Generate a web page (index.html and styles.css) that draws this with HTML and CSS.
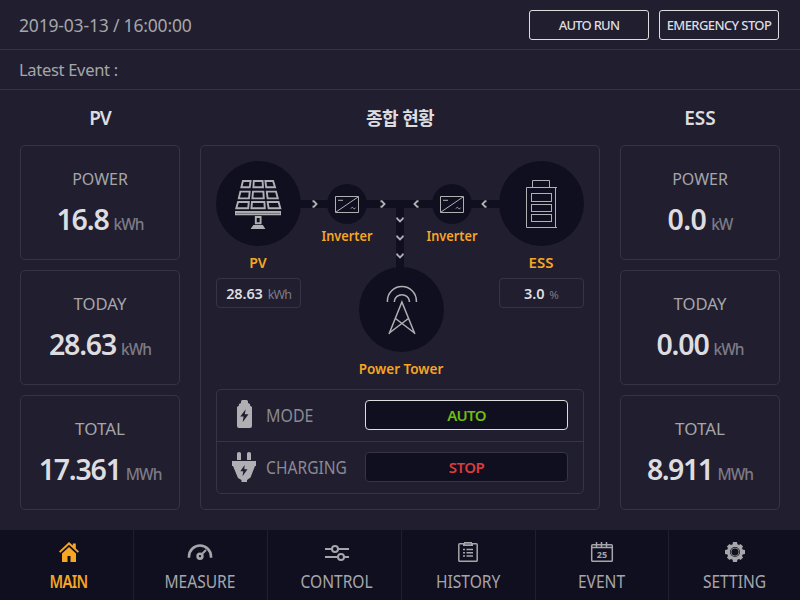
FILE: index.html
```html
<!DOCTYPE html>
<html lang="ko">
<head>
<meta charset="utf-8">
<title>Energy Monitor</title>
<link rel="stylesheet" href="styles.css">
</head>
<body>
<header class="topbar">
  <span class="clock">2019-03-13 / 16:00:00</span>
  <div class="actions">
    <button class="action auto-run">AUTO RUN</button>
    <button class="action emergency">EMERGENCY STOP</button>
  </div>
</header>
<div class="event-bar"><span>Latest Event :</span></div>

<main class="board">
  <section class="side">
    <h2><span class="t-pv">PV</span></h2>
    <div class="card"><p class="name n-power">POWER</p><p class="reading"><b>16.8</b><i>kWh</i></p></div>
    <div class="card"><p class="name n-today">TODAY</p><p class="reading"><b>28.63</b><i>kWh</i></p></div>
    <div class="card"><p class="name n-total">TOTAL</p><p class="reading"><b>17.361</b><i>MWh</i></p></div>
  </section>

  <section class="overview">
    <h2><span class="t-all">종합 현황</span></h2>
    <div class="panel">
      <div class="diagram">
        <div class="wire wire-h"></div>
        <div class="wire wire-v"></div>

        <svg class="node node-pv" viewBox="216 161 85 85">
          <circle class="disc" cx="258.5" cy="203.5" r="42.5"/>
          <g class="line thick">
            <path d="M242.9 181H250.6L249.7 187.3H241.4ZM253.8 181H262.6L263 187.3H253.4ZM265.4 181H273.1L275 187.3H266.2Z"/>
            <path d="M240.4 191.6H249.7L249 198.4H238.8ZM253 191.6H263.4L263.8 198.4H252.4ZM266.8 191.6H276L277.8 198.4H267.6Z"/>
            <path d="M238 202H248.8L248.2 208.3H236.3ZM252 202H264.4L264.8 208.3H251.4ZM267.6 202H278.6L280.3 208.3H268.6Z"/>
            <path d="M255.8 217H260.6V223.3H255.8Z"/>
          </g>
          <path class="solid" d="M235 211h46v4.3h-46ZM253.4 225h9.4l2.6 4h-14.8Z"/>
          <path class="cut" d="M236 213.4h44"/>
        </svg>

        <svg class="node node-inv1" viewBox="0 0 40 40">
          <circle class="disc" cx="20" cy="20" r="20"/>
          <path class="line" d="M8.5 12.5h23v16h-23ZM9 28l22-15"/>
          <path class="line" d="M11 16.3h5"/>
          <path class="line" d="M24 24.5c.8-1.5 1.7-1.2 2.3-.4s1.500 1.100 2.300-.4"/>
        </svg>
        <svg class="node node-inv2" viewBox="0 0 40 40">
          <circle class="disc" cx="20" cy="20" r="20"/>
          <path class="line" d="M8.500 12.500h23v16h-23ZM9 28l22-15"/>
          <path class="line" d="M11 16.300h5"/>
          <path class="line" d="M24 24.500c.8-1.500 1.700-1.200 2.300-.4s1.500 1.100 2.300-.4"/>
        </svg>

        <svg class="node node-ess" viewBox="499 161 85 85">
          <circle class="disc" cx="541.5" cy="203.500" r="42.500"/>
          <path class="line" d="M532.500 187v-6.500h17V187M526.500 187.500h29v40h-29ZM555 187.500h2M555 227.500h2"/>
          <path class="line" d="M531.500 193v8.500M551.500 193v8.500M531 193.500h21M531 201.500h21M531.500 204v8M551.500 204v8M531 204.500h21M531 211.500h21M531.500 214v8M551.500 214v8M531 214.500h21M531 221.500h21"/>
        </svg>

        <svg class="node node-tower" viewBox="359 267 85 85">
          <circle class="disc" cx="401.500" cy="309.500" r="42.500"/>
          <g class="line tower">
            <path d="M387.400 302v-1a14.500 14.500 0 0 1 29 0v1"/>
            <path d="M394.400 302v-1a7.600 7.600 0 0 1 15 0v1"/>
            <path d="M389 334L401.900 302 414.900 334M395.500 318.500L414.500 333M408.400 318.500L389.300 333"/>
          </g>
        </svg>

        <svg class="arrows" viewBox="216 161 368 192">
          <path d="M312.500 201.200h1.300l2.700 2.800-2.700 2.800h-1.300M380.500 201.200h1.300l2.700 2.800-2.700 2.800h-1.300"/>
          <path d="M418.500 201.200h-1.300l-2.700 2.800 2.700 2.800h1.300M486.500 201.200h-1.300l-2.700 2.800 2.700 2.800h1.300"/>
          <path d="M397.200 217.500v1.200l2.800 2.700 2.800-2.700v-1.200M397.200 235.500v1.200l2.800 2.700 2.800-2.700v-1.200M397.200 253.500v1.200l2.800 2.700 2.800-2.700v-1.200"/>
        </svg>

        <span class="tag tag-inv1">Inverter</span>
        <span class="tag tag-inv2">Inverter</span>
        <span class="tag tag-pv">PV</span>
        <span class="tag tag-ess">ESS</span>
        <span class="tag tag-tower">Power Tower</span>
        <div class="meter meter-pv"><b>28.63</b><i>kWh</i></div>
        <div class="meter meter-ess"><b>3.0</b><i class="pct">%</i></div>
      </div>

      <div class="controls">
        <div class="control">
          <svg class="cicon" viewBox="0 0 26 30"><path class="solid" d="M9 1.500q0-1.500 1.500-1.500h4q1.500 0 1.500 1.500v1.500l2 1v1.500l2 1.500V26q0 2-2 2H7q-2 0-2-2V7l2-1.500V4l2-1Z"/><path class="bolt" d="M13.700 9.200L8.300 16.500h3.300l-1 5.700 5.900-8h-3.700Z"/></svg>
          <span class="clabel l-mode">MODE</span>
          <button class="state on">AUTO</button>
        </div>
        <div class="control">
          <svg class="cicon" viewBox="0 0 26 30"><path class="solid" d="M5 1.500Q5 0 7 0t2 1.500V8H5ZM15 1.500Q15 0 17 0t2 1.500V8h-4ZM0 9h24v5h-1l-4.500 11.500L15 28v2H9.500v-2L6 26 1 14H0Z"/><path class="bolt" d="M12.700 13L8.300 19.200h3l-.8 5 5-7h-3.200Z"/></svg>
          <span class="clabel l-charging">CHARGING</span>
          <button class="state off">STOP</button>
        </div>
      </div>
    </div>
  </section>

  <section class="side">
    <h2><span class="t-ess">ESS</span></h2>
    <div class="card"><p class="name n-power">POWER</p><p class="reading"><b class="short">0.0</b><i>kW</i></p></div>
    <div class="card"><p class="name n-today">TODAY</p><p class="reading"><b>0.00</b><i>kWh</i></p></div>
    <div class="card"><p class="name n-total">TOTAL</p><p class="reading"><b class="tight">8.911</b><i>MWh</i></p></div>
  </section>
</main>

<nav class="tabs">
  <a class="tab active">
    <svg viewBox="0 0 26 22"><path class="fill" d="M3 11.500L13 2l3.800 3.500V3.500h3v5L23 11.500l-1.200 1.300L13 4.800l-8.700 8ZM6 13.500l7-6.400 7 6.400V22h-5.500v-6h-3v6H6Z"/></svg>
    <span class="m-main">MAIN</span>
  </a>
  <a class="tab measure">
    <svg viewBox="0 0 26 22"><path class="stroke w3" d="M2 17.800V16.500A11 11 0 0 1 24 16.500v1.300"/><circle class="stroke w3" cx="13" cy="16.200" r="2.400"/><path class="stroke w2" d="M15 14l4-4"/></svg>
    <span>MEASURE</span>
  </a>
  <a class="tab">
    <svg viewBox="0 0 26 22"><path class="stroke w2" d="M1 9h7M14 9h11M1 17h13M20 17h5"/><circle class="stroke knob" cx="11" cy="9" r="3"/><circle class="stroke knob" cx="17" cy="17" r="3"/></svg>
    <span>CONTROL</span>
  </a>
  <a class="tab history">
    <svg viewBox="0 0 26 22"><rect class="stroke" x="3.800" y="3.800" width="18.400" height="17.500" rx="1"/><path class="fill" d="M8 3h1V2h8v1h1v3H8Z"/><path class="dim" d="M10 4h6"/><path class="stroke" d="M8 9.500h2M11.500 9.500H18M8 12.700h2M11.500 12.700H18M8 16h2M11.500 16H18"/></svg>
    <span>HISTORY</span>
  </a>
  <a class="tab event">
    <svg viewBox="0 0 26 22"><rect class="stroke" x="2.700" y="4.700" width="20.600" height="16.600" rx="1"/><path class="stroke" d="M3 7.500h20M7.500 2v5M12.500 2v5M17.500 2v5"/><text x="13" y="17.600">25</text></svg>
    <span>EVENT</span>
  </a>
  <a class="tab setting">
    <svg viewBox="0 0 26 22"><circle class="stroke gear" cx="13" cy="12" r="6.500"/><path class="fill" d="M11 2h4l.7 4h-5.400ZM11 22h4l.7-4h-5.400ZM3 10v4l4 .7V9.300ZM23 10v4l-4 .7V9.300ZM4.900 6.500l2.600-2.600 3.200 2.300-3.500 3.500ZM21.100 6.500l-2.600-2.600-3.200 2.300 3.500 3.500ZM4.900 17.500l2.600 2.600 3.200-2.300-3.500-3.500ZM21.100 17.500l-2.600 2.600-3.200-2.300 3.500-3.500Z"/><circle class="hub" cx="13" cy="12" r="4"/></svg>
    <span>SETTING</span>
  </a>
</nav>
</body>
</html>
```
FILE: styles.css
```css
* { box-sizing: border-box; }

body {
  margin: 0;
  width: 800px;
  height: 600px;
  overflow: hidden;
  display: flex;
  flex-direction: column;
  background: #201e2f;
  color: #a6a6aa;
  font-family: "Noto Sans", "Noto Sans CJK KR", sans-serif;
  font-size: 16.500px;
}

p, h2 { margin: 0; }
b { font-weight: 600; }
i { font-style: normal; }
span, b, i, .name { white-space: nowrap; }

.topbar {
  height: 50px;
  padding: 0 21px 0 19px;
  display: flex;
  align-items: center;
  justify-content: space-between;
  border-bottom: 1px solid #363445;
}
.clock { font-size: 17.500px; letter-spacing: -0.180px; }
.actions { display: flex; gap: 10px; }
.action {
  width: 120px;
  height: 30px;
  padding: 1px 0 0;
  border: 1px solid #dddde0;
  border-radius: 3px;
  background: transparent;
  color: #dddde0;
  font: 500 13px "Noto Sans", sans-serif;
  white-space: nowrap;
}
.auto-run { letter-spacing: -0.750px; }
.emergency { letter-spacing: -0.600px; }

.event-bar {
  height: 40px;
  padding-left: 19px;
  display: flex;
  align-items: center;
  border-bottom: 1px solid #363445;
  letter-spacing: -0.300px;
}

.board {
  height: 440px;
  padding: 0 20px;
  display: flex;
  gap: 20px;
}
.side { width: 160px; display: flex; flex-direction: column; }
.overview { width: 400px; }
h2 {
  height: 55px;
  line-height: 57px;
  text-align: center;
  font-size: 19px;
  font-weight: 600;
  color: #dddde0;
}
.t-pv { letter-spacing: -1px; }
.t-all {
  font-family: "Noto Sans CJK KR", sans-serif;
  font-weight: 700;
  font-size: 18px;
  line-height: 53px;
  letter-spacing: -0.700px;
}

.card {
  height: 115px;
  margin-bottom: 10px;
  padding-top: 20px;
  border: 1px solid #363445;
  border-radius: 5px;
  text-align: center;
}
.name { height: 26px; line-height: 25px; font-size: 17px; }
.n-power { transform: scaleX(0.940); }
.n-today { transform: scaleX(0.980); }
.reading { height: 40px; margin-top: 7px; line-height: 40px; color: #dddde0; }
.reading b { font-size: 28.500px; letter-spacing: -1.200px; }
.reading .short { letter-spacing: -0.600px; }
.reading .tight { letter-spacing: -1.500px; }
.reading i { margin-left: 5px; font-size: 15.500px; font-weight: 500; color: #7c7b86; letter-spacing: -1px; }

.panel {
  height: 365px;
  padding: 15px;
  border: 1px solid #363445;
  border-radius: 5px;
}
.diagram { position: relative; height: 228px; }
.node, .tag, .meter, .wire, .arrows { position: absolute; }
.wire { background: #100f20; }
.wire-h { left: 80px; top: 39px; width: 210px; height: 8px; }
.wire-v { left: 180px; top: 45px; width: 8px; height: 70px; }
.arrows { left: 0; top: 0; width: 368px; height: 192px; fill: none; stroke: #b0b0b4; stroke-width: 1.900; }
.node-pv { left: 0; top: 0; width: 85px; height: 85px; }
.node-ess { left: 283px; top: 0; width: 85px; height: 85px; }
.node-tower { left: 143px; top: 106px; width: 85px; height: 85px; }
.node-inv1, .node-inv2 { top: 23px; width: 40px; height: 40px; }
.node-inv1 { left: 111px; }
.node-inv2 { left: 216px; }
.disc { fill: #100f20; }
.line { fill: none; stroke: #b0b0b4; stroke-width: 1; }
.thick { stroke-width: 1.900; }
.tower { stroke-width: 1.500; }
.solid { fill: #b0b0b4; }
.cut { stroke: #5b5a66; stroke-width: 0.700; }

.tag {
  width: 100px;
  height: 20px;
  line-height: 20px;
  text-align: center;
  color: #f6a623;
  font-size: 15px;
  font-weight: 600;
}
.tag-inv1, .tag-inv2 { top: 64px; transform: scaleX(0.850); }
.tag-inv1 { left: 81px; }
.tag-inv2 { left: 186px; }
.tag-pv { left: -8px; top: 91px; transform: scaleX(0.940); }
.tag-ess { left: 275px; top: 91px; }
.tag-tower { left: 135px; top: 197px; transform: scaleX(0.900); }

.meter {
  top: 117px;
  width: 85px;
  height: 30px;
  display: flex;
  align-items: baseline;
  justify-content: center;
  gap: 5px;
  border: 1px solid #363445;
  border-radius: 4px;
  line-height: 28px;
}
.meter-pv { left: 0; }
.meter-ess { left: 283px; }
.meter b { color: #dddde0; font-size: 14.500px; letter-spacing: -0.100px; }
.meter i { color: #7c7b86; font-size: 12.500px; letter-spacing: -1px; }
.meter .pct { font-size: 11.500px; letter-spacing: 0; }

.controls {
  height: 105px;
  border: 1px solid #363445;
  border-radius: 5px;
}
.control {
  height: 51px;
  padding: 0 15px 2px;
  display: flex;
  align-items: center;
}
.control + .control { height: 52px; border-top: 1px solid #363445; }
.cicon { width: 26px; height: 30px; margin-top: 1px; }
.control + .control .cicon { margin-top: 0; }
.bolt { fill: #201e2f; }
.clabel { width: 99px; margin: 1px 0 0 8px; color: #8b8a93; font-size: 17.500px; transform-origin: 1px 50%; }
.l-mode { transform: scaleX(0.910); }
.l-charging { transform: scaleX(0.890); }
.state {
  width: 203px;
  height: 30px;
  padding: 0;
  border: 1px solid #363445;
  border-radius: 4px;
  background: #100f20;
  font: 600 15px "Noto Sans", sans-serif;
  letter-spacing: -0.700px;
}
.on { border-color: #dddde0; color: #6fbe0c; }
.off { color: #dc3b3b; letter-spacing: -0.500px; }

.tabs {
  height: 70px;
  display: grid;
  grid-template-columns: 134px 134px 134px 134px 133px 131px;
  background: #100f20;
}
.tab {
  padding: 10px 0 0 4px;
  display: flex;
  flex-direction: column;
  align-items: center;
  border-right: 1px solid #201e2f;
  color: #a6a6aa;
  font-size: 17.500px;
}
.tab:last-child { border-right: 0; }
.measure, .history, .event { padding: 10px 1px 0 0; }
.setting { padding-left: 1px; }
.tab svg { width: 26px; height: 22px; }
.tab span { height: 26px; line-height: 26px; margin-top: 6px; transform: scaleX(0.890); }
.active { color: #f6a623; font-weight: 600; }
.active .m-main { letter-spacing: -0.800px; transform: scaleX(0.840); }
.fill { fill: currentColor; }
.stroke { fill: none; stroke: currentColor; stroke-width: 1.500; }
.w2 { stroke-width: 2; }
.w3 { stroke-width: 2.600; }
.knob { stroke-width: 2; }
.gear { stroke-width: 3; }
.hub { fill: #100f20; stroke: #77767f; stroke-width: 1; }
.dim { stroke: #5b5a66; stroke-width: 1; }
.tab text { font: 700 9px "Noto Sans", sans-serif; text-anchor: middle; fill: currentColor; }
```
